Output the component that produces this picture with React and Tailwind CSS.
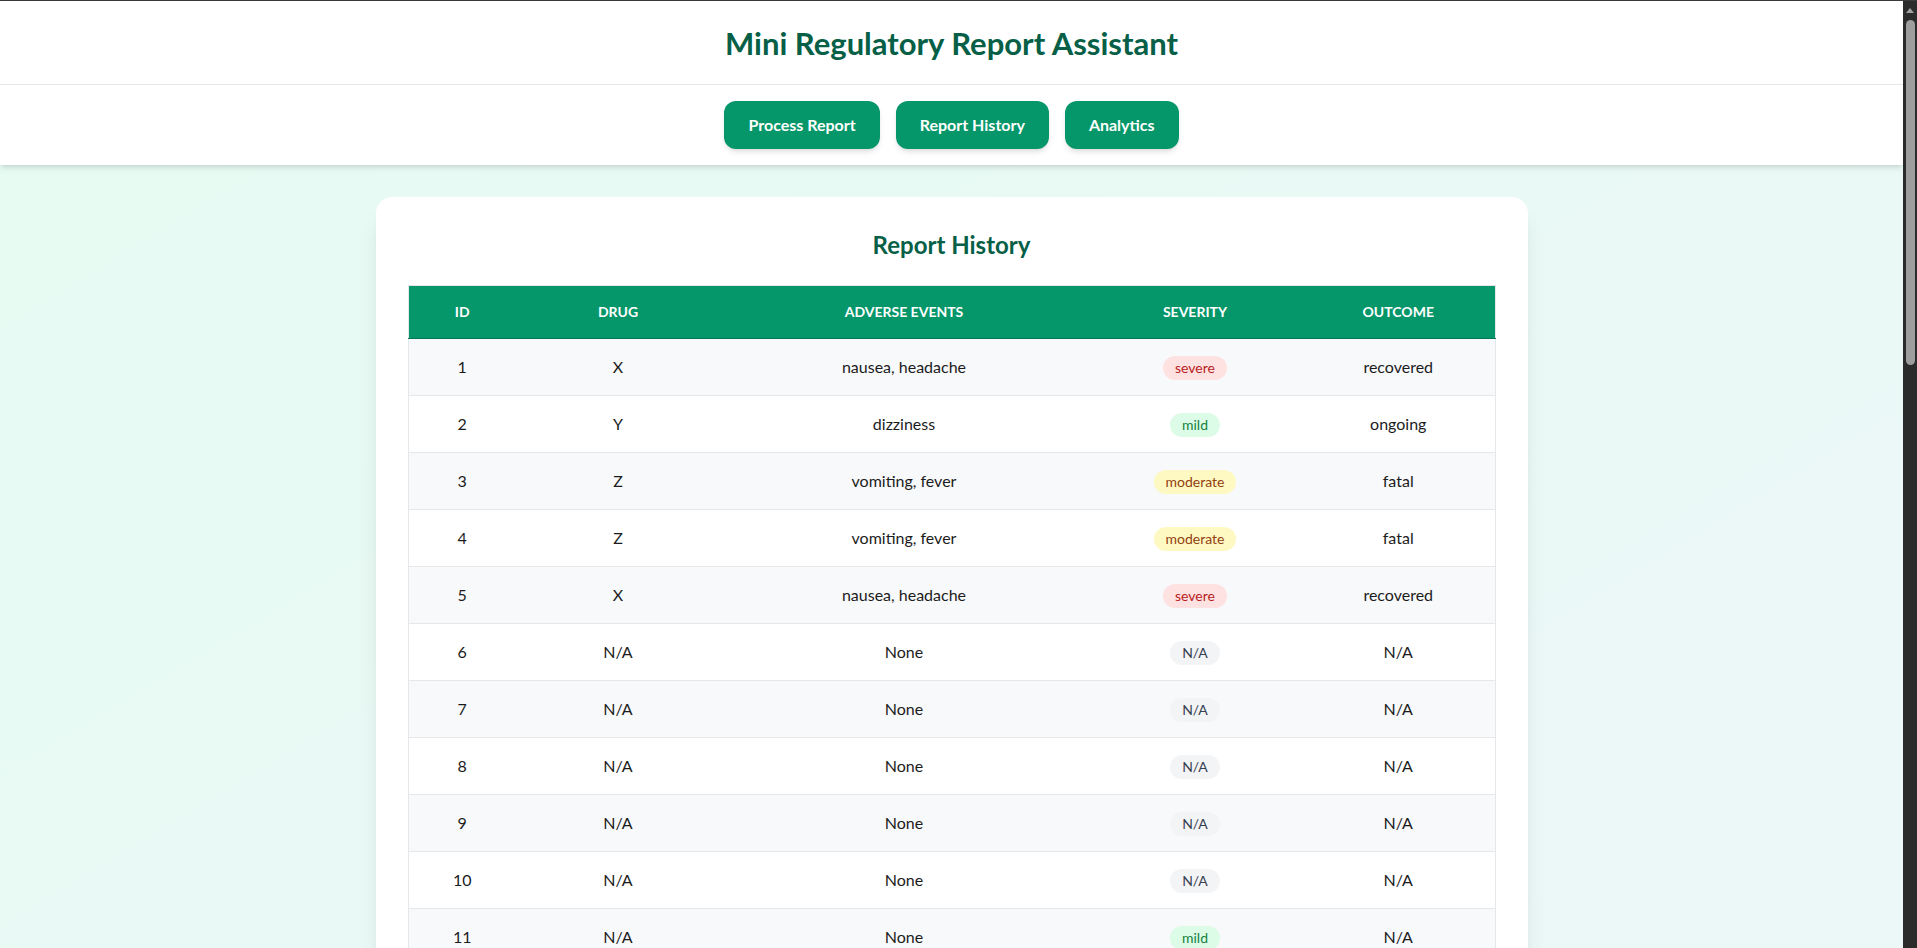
import React from "react";

const rows = [
  { id: 1, drug: "X", events: "nausea, headache", severity: "severe", outcome: "recovered" },
  { id: 2, drug: "Y", events: "dizziness", severity: "mild", outcome: "ongoing" },
  { id: 3, drug: "Z", events: "vomiting, fever", severity: "moderate", outcome: "fatal" },
  { id: 4, drug: "Z", events: "vomiting, fever", severity: "moderate", outcome: "fatal" },
  { id: 5, drug: "X", events: "nausea, headache", severity: "severe", outcome: "recovered" },
  { id: 6, drug: "N/A", events: "None", severity: "N/A", outcome: "N/A" },
  { id: 7, drug: "N/A", events: "None", severity: "N/A", outcome: "N/A" },
  { id: 8, drug: "N/A", events: "None", severity: "N/A", outcome: "N/A" },
  { id: 9, drug: "N/A", events: "None", severity: "N/A", outcome: "N/A" },
  { id: 10, drug: "N/A", events: "None", severity: "N/A", outcome: "N/A" },
  { id: 11, drug: "N/A", events: "None", severity: "mild", outcome: "N/A" },
  { id: 12, drug: "N/A", events: "None", severity: "N/A", outcome: "N/A" },
  { id: 13, drug: "N/A", events: "None", severity: "N/A", outcome: "N/A" },
];

const badgeStyles = {
  severe: "bg-[#fee2e2] text-[#b91c1c]",
  mild: "bg-[#dcfce7] text-[#15803d]",
  moderate: "bg-[#fef9c3] text-[#92400e]",
  "N/A": "bg-[#f3f4f6] text-[#374151]",
};

function Badge({ value }) {
  return (
    <span
      className={
        "inline-flex items-center h-6 px-3 rounded-full text-[14px] leading-[17px] align-middle " +
        (badgeStyles[value] || badgeStyles["N/A"])
      }
    >
      {value}
    </span>
  );
}

function NavButton({ children }) {
  return (
    <button className="h-12 px-6 rounded-xl bg-[#059669] text-white text-[16px] font-bold shadow-md">
      {children}
    </button>
  );
}

function Scrollbar() {
  return (
    <aside className="sticky top-0 h-screen w-[14px] shrink-0 bg-[#2b2b2b] flex flex-col items-center">
      <svg width="10" height="19" viewBox="0 0 10 19" className="shrink-0">
        <path d="M1 12 L5 7 L9 12 Z" fill="#a3a3a3" />
      </svg>
      <div className="w-[9px] h-[345px] rounded-full bg-[#9e9e9e]" />
    </aside>
  );
}

export default function App() {
  return (
    <div className="flex min-h-screen border-t border-[#3a3a3a] font-['Lato',sans-serif]">
      <div className="flex-1 min-w-0 bg-linear-to-br from-[#e6fbf2] to-[#edf7f9] pb-10">
        <header className="bg-white shadow-md">
          <div className="h-[84px] flex items-center justify-center border-b border-[#e5e7eb]">
            <h1 className="text-[31px] font-bold text-[#065f46] leading-10">
              Mini Regulatory Report Assistant
            </h1>
          </div>
          <nav className="flex justify-center gap-4 py-4">
            <NavButton>Process Report</NavButton>
            <NavButton>Report History</NavButton>
            <NavButton>Analytics</NavButton>
          </nav>
        </header>
        <main className="pt-8 px-4">
          <div className="max-w-6xl mx-auto bg-white rounded-2xl shadow-xl p-8">
            <h2 className="text-2xl leading-8 font-bold text-center text-[#065f46] mb-6">
              Report History
            </h2>
            <table className="w-full table-fixed border-collapse border border-[#e5e7eb]">
              <colgroup>
                <col className="w-[108px]" />
                <col className="w-[204px]" />
                <col className="w-[368px]" />
                <col className="w-[214px]" />
                <col />
              </colgroup>
              <thead>
                <tr className="bg-[#059669] text-white border-b border-[#047857]">
                  <th className="h-[53px] py-0 text-[14px] leading-5 font-bold uppercase">ID</th>
                  <th className="h-[53px] py-0 text-[14px] leading-5 font-bold uppercase">Drug</th>
                  <th className="h-[53px] py-0 text-[14px] leading-5 font-bold uppercase">Adverse Events</th>
                  <th className="h-[53px] py-0 text-[14px] leading-5 font-bold uppercase">Severity</th>
                  <th className="h-[53px] py-0 text-[14px] leading-5 font-bold uppercase">Outcome</th>
                </tr>
              </thead>
              <tbody>
                {rows.map((r, i) => (
                  <tr
                    key={r.id}
                    className={
                      "border-b border-[#e5e7eb] text-[#1c1c1c] " +
                      (i % 2 === 0 ? "bg-[#f8f9fb]" : "bg-white")
                    }
                  >
                    <td className="h-[57px] py-0 text-center text-[16px] leading-6">{r.id}</td>
                    <td className="h-[57px] py-0 text-center text-[16px] leading-6">{r.drug}</td>
                    <td className="h-[57px] py-0 text-center text-[16px] leading-6">{r.events}</td>
                    <td className="h-[57px] py-0 text-center text-[16px] leading-6">
                      <Badge value={r.severity} />
                    </td>
                    <td className="h-[57px] py-0 text-center text-[16px] leading-6">{r.outcome}</td>
                  </tr>
                ))}
              </tbody>
            </table>
          </div>
        </main>
      </div>
      <Scrollbar />
    </div>
  );
}
